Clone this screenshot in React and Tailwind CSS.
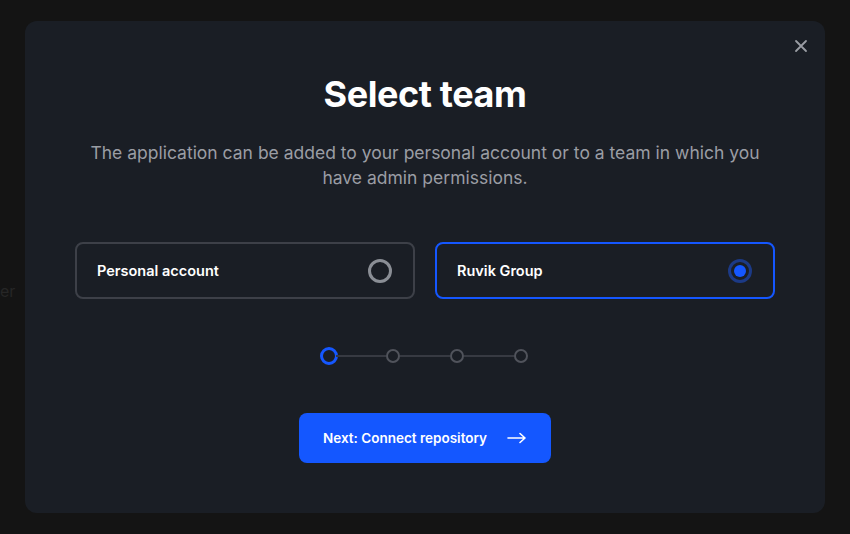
import { useState } from "react";

function Radio({ checked }) {
  if (checked) {
    return (
      <span className="flex items-center justify-center w-[24px] h-[24px] rounded-full border-[3px] border-[#1c3a86]">
        <span className="w-[12px] h-[12px] rounded-full bg-[#1557ff]" />
      </span>
    );
  }
  return <span className="w-[24px] h-[24px] rounded-full border-[3px] border-[#8a8e95]" />;
}

function TeamCard({ label, checked, onClick }) {
  return (
    <button
      onClick={onClick}
      className={`flex items-center justify-between h-[57px] w-[340px] pl-[20px] pr-[21px] rounded-lg border-2 text-left ${
        checked ? "border-[#1557ff]" : "border-[#3d4048]"
      }`}
    >
      <span className="text-[14.5px] font-semibold text-white">{label}</span>
      <Radio checked={checked} />
    </button>
  );
}

function Stepper({ step = 0 }) {
  const dots = [0, 1, 2, 3];
  return (
    <div className="flex items-center">
      {dots.map((i) => (
        <div key={i} className="flex items-center">
          {i > 0 && <span className="w-[50px] h-[2px] bg-[#373a42]" />}
          {i === step ? (
            <span className="w-[18px] h-[18px] rounded-full border-[3px] border-[#1557ff] -mx-[2px]" />
          ) : (
            <span className="w-[14px] h-[14px] rounded-full border-2 border-[#50535b]" />
          )}
        </div>
      ))}
    </div>
  );
}

export default function App() {
  const [selected, setSelected] = useState("ruvik");

  return (
    <div
      className="relative w-[850px] h-[534px] bg-[#141414] flex justify-center pt-[21px] overflow-hidden"
      style={{ fontFamily: "Inter, 'Noto Sans', sans-serif" }}
    >
      {/* faint page content behind the overlay */}
      <span className="absolute left-0 top-[279px] text-[16px] text-[#262626]">er</span>

      <div className="relative w-[800px] h-[492px] bg-[#1a1e25] rounded-xl flex flex-col items-center">
        <button className="absolute right-[16px] top-[17px] text-[#9a9da4]">
          <svg width="16" height="16" viewBox="0 0 16 16" fill="none" stroke="currentColor" strokeWidth="1.8" strokeLinecap="round">
            <path d="M3 3l10 10M13 3L3 13" />
          </svg>
        </button>

        <h1 className="mt-[51px] text-[36px] leading-[44px] font-bold text-white tracking-[-0.4px]">Select team</h1>
        <p className="mt-[24px] w-[690px] text-center text-[17.5px] leading-[25px] text-[#9a9da4]">
          The application can be added to your personal account or to a team in which you have admin permissions.
        </p>

        <div className="flex gap-[20px] mt-[52px]">
          <TeamCard label="Personal account" checked={selected === "personal"} onClick={() => setSelected("personal")} />
          <TeamCard label="Ruvik Group" checked={selected === "ruvik"} onClick={() => setSelected("ruvik")} />
        </div>

        <div className="mt-[48px]">
          <Stepper step={0} />
        </div>

        <button className="mt-[48px] flex items-center justify-center gap-[20px] w-[252px] h-[50px] rounded-lg bg-[#1457ff] text-white text-[13.5px] font-semibold">
          Next: Connect repository
          <svg width="20" height="12" viewBox="0 0 20 12" fill="none" stroke="currentColor" strokeWidth="1.6" strokeLinecap="round" strokeLinejoin="round">
            <path d="M1 6h17M13 1.5L18 6l-5 4.5" />
          </svg>
        </button>
      </div>
    </div>
  );
}
